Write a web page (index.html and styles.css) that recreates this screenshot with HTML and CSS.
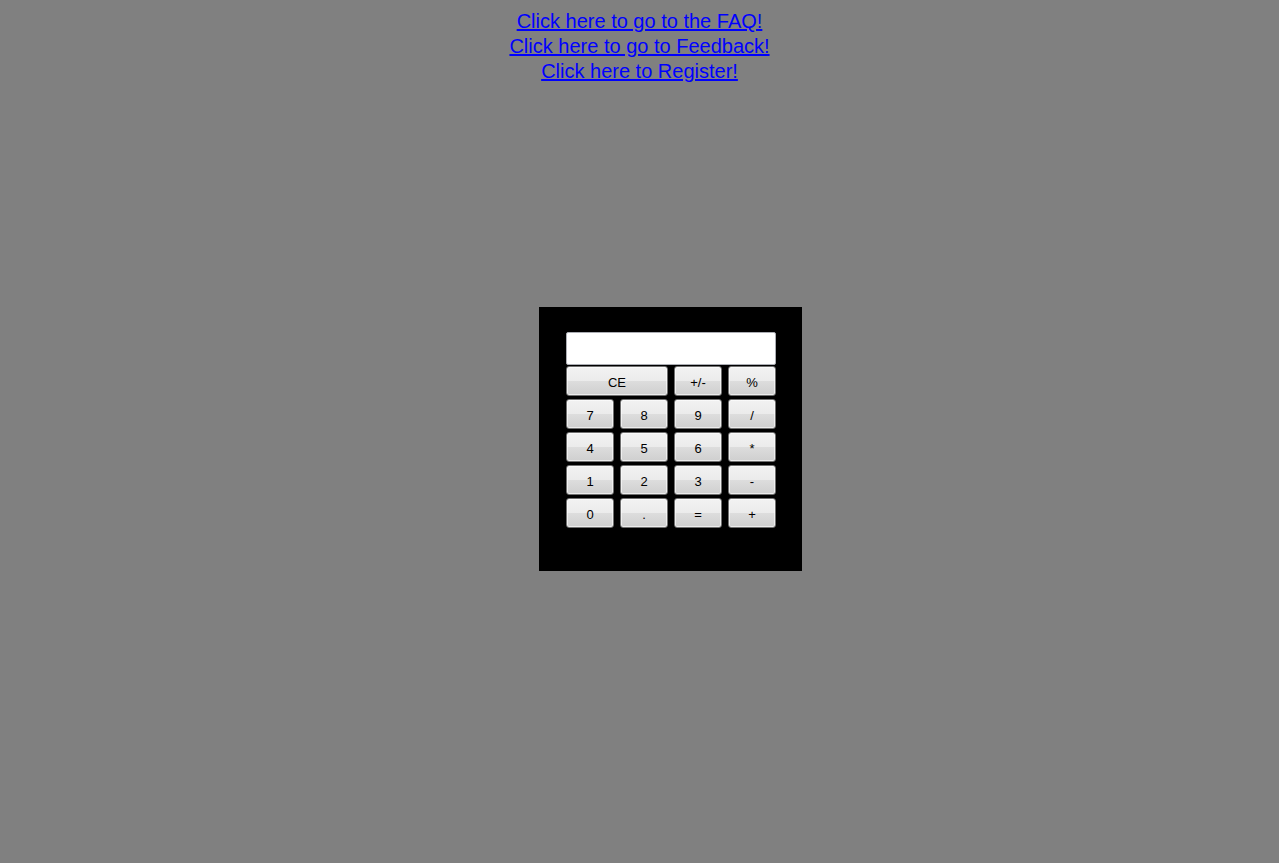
FILE: index.html
```html
<!DOCTYPE html>
<html>
<head>
<meta charset="utf-8">
<title>Calculator</title>
<link rel="stylesheet" href="styles.css">
</head>
<body>
<div class="links">
  <a href="#">Click here to go to the FAQ!</a><br>
  <a href="#">Click here to go to Feedback!</a><br>
  <a href="#">Click here to Register!</a>
</div>
<div class="calc">
  <input class="display" type="text">
  <div class="keys">
    <button class="key wide">CE</button>
    <button class="key">+/-</button>
    <button class="key">%</button>
    <button class="key">7</button>
    <button class="key">8</button>
    <button class="key">9</button>
    <button class="key">/</button>
    <button class="key">4</button>
    <button class="key">5</button>
    <button class="key">6</button>
    <button class="key">*</button>
    <button class="key">1</button>
    <button class="key">2</button>
    <button class="key">3</button>
    <button class="key">-</button>
    <button class="key">0</button>
    <button class="key">.</button>
    <button class="key">=</button>
    <button class="key">+</button>
  </div>
</div>
</body>
</html>
```

FILE: styles.css
```css
html, body {
  background: #808080;
}
body {
  margin: 8px;
  font-family: "Liberation Sans", Arial, sans-serif;
}
.links {
  text-align: center;
  font-size: 20px;
  line-height: 25px;
  padding-top: 1px;
}
.links a {
  color: #0000ff;
  text-decoration: underline;
}
.calc {
  box-sizing: border-box;
  width: 263px;
  height: 264px;
  margin-top: 223px;
  margin-left: calc(50% - 100.5px);
  background: #000;
  padding: 25px 26px 0 27px;
}
.display {
  display: block;
  box-sizing: border-box;
  width: 210px;
  height: 33px;
  margin: 0 0 1px 0;
  padding: 0 4px;
  background: #fff;
  border: 1px solid #abadb3;
  border-radius: 2px;
  outline: none;
}
.keys {
  display: grid;
  grid-template-columns: repeat(4, 48px);
  grid-auto-rows: 30px;
  column-gap: 6px;
  row-gap: 3px;
}
.key {
  box-sizing: border-box;
  margin: 0;
  padding: 2px 0 0 0;
  font-family: "Liberation Sans", Arial, sans-serif;
  font-size: 13px;
  color: #000;
  border: 1px solid #707070;
  border-radius: 3px;
  background: linear-gradient(#f2f2f2 0%, #ebebeb 50%, #dddddd 50%, #cfcfcf 100%);
  box-shadow: inset 0 0 0 1px rgba(255,255,255,0.6);
}
.key.wide {
  grid-column: span 2;
}
```
